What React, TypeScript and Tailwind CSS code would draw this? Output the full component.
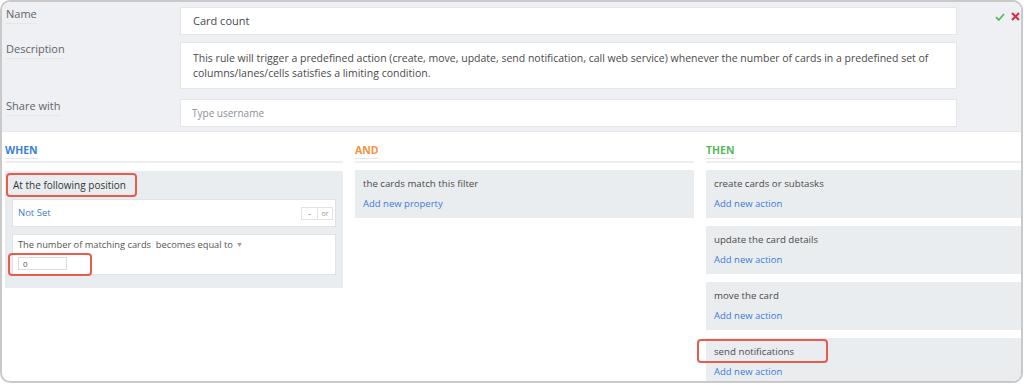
import React from 'react';

// 规则编辑器：上半部分是名称/描述/共享，下半部分是 WHEN / AND / THEN 三列

function Mark({ className }: { className: string }) {
  // 红色标注框（截图上的批注）
  return (
    <span
      aria-hidden
      className={`pointer-events-none absolute rounded-[4px] border-2 border-[#e85c4e] ${className}`}
    />
  );
}

function FormRow({ label, children, className = '' }: { label: string; children: React.ReactNode; className?: string }) {
  return (
    <div className={`flex items-start ${className}`}>
      <div className="w-[178px] pl-[4px] text-[11px] leading-[13px] text-[#5f6368]">
        <span className="border-b border-[#e3e6ea] pb-[2px]">{label}</span>
      </div>
      <div className="w-[777px] border border-[#e3e6ea] bg-white">{children}</div>
    </div>
  );
}

function ColumnHeader({ title, color }: { title: string; color: string }) {
  return (
    <div className={`border-b-2 border-[#eceef1] pb-[4px] pt-[11px] text-[10.5px] font-bold leading-[14px] ${color}`}>
      <span className="border-b border-[#e3e6ea] pb-[1px]">{title}</span>
    </div>
  );
}

function ActionBox({ title, link, mark = false }: { title: string; link: string; mark?: boolean }) {
  return (
    <div className="h-[48px] bg-[#eaedf0] px-[8px] pt-[8px]">
      <div className="relative text-[9.7px] leading-[12px] text-[#4a4a4a]">
        {title}
        {mark ? <Mark className="-left-[17px] -top-[7px] h-[24px] w-[131px]" /> : null}
      </div>
      <div className="mt-[8px] text-[9.5px] leading-[12px] text-[#3d7bd6]">{link}</div>
    </div>
  );
}

export default function App() {
  return (
    <div className="h-[385px] w-[1024px] bg-white font-['Open_Sans',sans-serif]">
      <div className="h-[383px] w-[1023px] overflow-hidden rounded-[10px] border-2 border-[#c9c9c9]">
        {/* 表单区 */}
        <div className="relative flex h-[129px] flex-col bg-[#eef0f3] pt-[5px]">
          <FormRow label="Name">
            <div className="flex h-[26px] items-center px-[12px] text-[11px] text-[#4a4a4a]">Card count</div>
          </FormRow>
          <FormRow label="Description" className="mt-[7px]">
            <div className="h-[45px] px-[12px] pt-[8px] text-[10.5px] leading-[15px] text-[#4a4a4a]">
              This rule will trigger a predefined action (create, move, update, send notification, call web service)
              whenever the number of cards in a predefined set of columns/lanes/cells satisfies a limiting condition.
            </div>
          </FormRow>
          <FormRow label="Share with" className="mt-[10px]">
            <div className="flex h-[26px] items-center px-[11px] text-[10px] text-[#8a8f96]">Type username</div>
          </FormRow>
          <div className="absolute right-[1px] top-[10px] flex items-center gap-[6px]">
            <svg width="10" height="8" viewBox="0 0 10 8" aria-hidden>
              <path d="M1 4.2 L3.8 7 L9 1" fill="none" stroke="#5cb85c" strokeWidth="1.8" />
            </svg>
            <svg width="9" height="9" viewBox="0 0 9 9" aria-hidden>
              <path d="M1 1 L8 8 M8 1 L1 8" fill="none" stroke="#d9303e" strokeWidth="2" />
            </svg>
          </div>
        </div>

        {/* 规则区 */}
        <div className="flex gap-[12px] border-t border-[#e6e8eb] pl-[3px]">
          {/* WHEN */}
          <div className="w-[338px] shrink-0">
            <ColumnHeader title="WHEN" color="text-[#3d7fd9]" />
            <div className="mt-[8px] bg-[#eaedf0] px-[7px] pb-[13px] pt-[8px]">
              <div className="relative pl-[1px] text-[10px] font-medium leading-[12px] text-[#333]">
                At the following position
                <Mark className="-left-[6px] -top-[6px] h-[24px] w-[131px]" />
              </div>
              <div className="mt-[8px] flex h-[28px] items-center justify-between border border-[#e0e3e7] bg-white pl-[5px] pr-[2px]">
                <span className="text-[9.5px] text-[#3d7bd6]">Not Set</span>
                <div className="flex">
                  <span className="flex h-[13px] w-[17px] items-center justify-center border border-[#e0e3e7] text-[8px] leading-none text-[#555]">-</span>
                  <span className="-ml-px flex h-[13px] w-[16px] items-center justify-center border border-[#e0e3e7] text-[7px] leading-none text-[#999]">or</span>
                </div>
              </div>
              <div className="mt-[7px] h-[41px] border border-[#e0e3e7] bg-white pl-[5px] pt-[4px]">
                <div className="flex items-center text-[9.3px] leading-[12px] text-[#555]">
                  The number of matching cards&nbsp; becomes equal to
                  <span className="ml-[3px] text-[7px] text-[#999]">▼</span>
                </div>
                <div className="relative mt-[6px] h-[13px] w-[49px] border border-[#d8dbdf] pl-[4px] text-[8px] leading-[11px] text-[#555]">
                  0
                  <Mark className="-left-[11px] -top-[5px] h-[23px] w-[84px]" />
                </div>
              </div>
            </div>
          </div>

          {/* AND */}
          <div className="w-[339px] shrink-0">
            <ColumnHeader title="AND" color="text-[#f5923e]" />
            <div className="mt-[7px]">
              <ActionBox title="the cards match this filter" link="Add new property" />
            </div>
          </div>

          {/* THEN */}
          <div className="w-[339px] shrink-0">
            <ColumnHeader title="THEN" color="text-[#5cb85c]" />
            <div className="mt-[7px] flex flex-col gap-[8px]">
              <ActionBox title="create cards or subtasks" link="Add new action" />
              <ActionBox title="update the card details" link="Add new action" />
              <ActionBox title="move the card" link="Add new action" />
              <ActionBox title="send notifications" link="Add new action" mark />
            </div>
          </div>
        </div>
      </div>
    </div>
  );
}
